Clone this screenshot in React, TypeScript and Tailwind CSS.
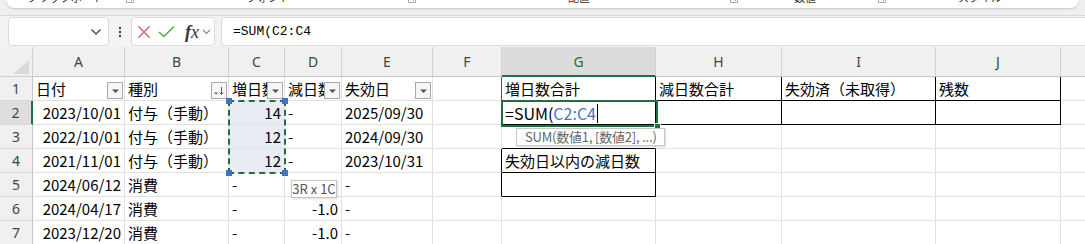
import React from "react";

const JP = '"Noto Sans CJK JP", "Noto Sans", sans-serif';
const UI = '"Noto Sans", "Noto Sans CJK JP", sans-serif';

const LETTERS = ["A", "B", "C", "D", "E", "F", "G", "H", "I", "J"];

type C = { t?: React.ReactNode; r?: boolean; f?: "d" | "s"; cls?: string };

const rows: C[][] = [
  [
    { t: "日付", f: "d" },
    { t: "種別", f: "s" },
    { t: "増日数", f: "d" },
    { t: "減日数", f: "d" },
    { t: "失効日", f: "d" },
    {},
    { t: "増日数合計", cls: "text-[13px]" },
    { t: "減日数合計", cls: "text-[13px]" },
    { t: "失効済（未取得）", cls: "text-[14px] text-[#555]" },
    { t: "残数", cls: "text-[14px] text-[#555]" },
  ],
  [
    { t: "2023/10/01", r: true },
    { t: "付与（手動）" },
    { t: "14", r: true },
    { t: "-" },
    { t: "2025/09/30" },
    {},
    {},
    {},
    {},
    {},
  ],
  [
    { t: "2022/10/01", r: true },
    { t: "付与（手動）" },
    { t: "12", r: true },
    { t: "-" },
    { t: "2024/09/30" },
    {},
    {},
    {},
    {},
    {},
  ],
  [
    { t: "2021/11/01", r: true },
    { t: "付与（手動）" },
    { t: "12", r: true },
    { t: "-" },
    { t: "2023/10/31" },
    {},
    { t: "失効日以内の減日数" },
    {},
    {},
    {},
  ],
  [
    { t: "2024/06/12", r: true },
    { t: "消費" },
    { t: "-" },
    { t: "" },
    { t: "-" },
    {},
    {},
    {},
    {},
    {},
  ],
  [
    { t: "2024/04/17", r: true },
    { t: "消費" },
    { t: "-" },
    { t: "-1.0", r: true },
    { t: "-" },
    {},
    {},
    {},
    {},
    {},
  ],
  [
    { t: "2023/12/20", r: true },
    { t: "消費" },
    { t: "-" },
    { t: "-1.0", r: true },
    { t: "-" },
    {},
    {},
    {},
    {},
    {},
  ],
];

const blackRight = new Set([
  "5,0", "5,1", "6,0", "7,0", "8,0", "9,0", "6,1", "7,1", "8,1", "9,1",
  "5,3", "5,4", "6,3", "6,4",
]);
const blackBottom = new Set([
  "6,0", "7,0", "8,0", "9,0", "6,1", "7,1", "8,1", "9,1", "6,2", "6,3", "6,4",
]);

function FilterBtn({ kind }: { kind: "d" | "s" }) {
  return (
    <div className="absolute right-[1px] bottom-[1px] w-[16px] h-[17px] border border-[#a9a9a9] bg-[#f6f6f6] flex items-center justify-center">
      {kind === "d" ? (
        <svg width="9" height="6" viewBox="0 0 9 6">
          <path d="M1 1.5h7L4.5 5z" fill="#555" />
        </svg>
      ) : (
        <svg width="12" height="10" viewBox="0 0 12 10">
          <path d="M1 6.5h4L3 8.5z" fill="#555" />
          <path d="M8.5 1v7.5M6.8 6.6l1.7 1.9 1.7-1.9" stroke="#555" strokeWidth="1" fill="none" />
        </svg>
      )}
    </div>
  );
}

function Cell({ c, col, row }: { c: C; col: number; row: number }) {
  const key = `${col},${row}`;
  const sel = col === 2 && row >= 1 && row <= 3;
  let rightCls = "border-r-[#e1e1e1]";
  if (blackRight.has(key)) rightCls = "border-r-black";
  if (key === "5,0") rightCls = "border-r-[#1e6e42]";
  const bottomCls = blackBottom.has(key) ? "border-b-black" : "border-b-[#e1e1e1]";
  const isG2 = key === "6,1";
  return (
    <div
      className={`relative border-r border-b ${rightCls} ${bottomCls} ${sel ? "bg-[#e8ecf5]" : "bg-white"} flex items-center overflow-hidden whitespace-nowrap ${
        c.r ? "justify-end pr-[3px]" : "justify-start pl-[3px]"
      } text-[15px] text-black pt-[1px] ${c.cls ?? ""}`}
      style={{ fontFamily: JP }}
    >
      {isG2 ? (
        <span className="text-[16px] flex items-center">
          <span>=SUM(</span>
          <span className="text-[#4a74c4]">C2:C4</span>
          <span className="inline-block w-[1px] h-[19px] bg-black ml-[1px]" />
        </span>
      ) : (
        c.t
      )}
      {c.f && <FilterBtn kind={c.f} />}
    </div>
  );
}

function Launcher() {
  return (
    <svg width="8" height="8" viewBox="0 0 8 8" className="-mt-[5px]">
      <path d="M0.5 0.5h7v7h-7z" stroke="#aaa" strokeWidth="1" fill="none" />
      <path d="M3 3l3 3" stroke="#aaa" strokeWidth="1" />
    </svg>
  );
}

export default function App() {
  const gridCols = "grid-cols-[33px_92px_104px_56px_57px_91px_69px_154px_126px_154px_125px_1fr]";
  return (
    <div className="w-[1085px] h-[244px] overflow-hidden bg-white" style={{ fontFamily: UI }}>
      {/* ribbon remnant */}
      <div className="h-[16px] bg-[#efefef] px-[7px] pb-[1px] border-b border-[#dadada]">
        <div className="h-[8px] bg-white rounded-b-[7px] shadow-[0_1px_2px_rgba(0,0,0,0.18)] overflow-hidden flex items-start text-[11px] text-[#333] leading-[12px]" style={{ fontFamily: JP }}>
          <span className="ml-[20px] -mt-[9px]">クリップボード</span>
          <span className="ml-[22px]"><Launcher /></span>
          <span className="ml-[112px] -mt-[9px]">フォント</span>
          <span className="ml-[118px]"><Launcher /></span>
          <span className="ml-[152px] -mt-[9px]">配置</span>
          <span className="ml-[140px]"><Launcher /></span>
          <span className="ml-[56px] -mt-[9px]">数値</span>
          <span className="ml-[62px]"><Launcher /></span>
          <span className="ml-[72px] -mt-[9px]">スタイル</span>
        </div>
      </div>
      {/* formula bar */}
      <div className="h-[31px] bg-[#f3f3f3] flex items-stretch pl-[8px] pt-[1px] pb-[1px]">
        <div className="w-[101px] bg-white border border-[#dcdcdc] rounded-[4px] flex items-center justify-end pr-[6px]">
          <svg width="12" height="8" viewBox="0 0 12 8">
            <path d="M1.5 1.5l4.5 4.5 4.5-4.5" stroke="#444" strokeWidth="1.3" fill="none" />
          </svg>
        </div>
        <div className="w-[22px] flex items-center justify-center">
          <svg width="4" height="12" viewBox="0 0 4 12">
            <circle cx="2" cy="2" r="1.2" fill="#444" />
            <circle cx="2" cy="6" r="1.2" fill="#444" />
            <circle cx="2" cy="10" r="1.2" fill="#444" />
          </svg>
        </div>
        <div className="w-[84px] bg-white border border-[#dcdcdc] rounded-[4px] flex items-center pl-[5px]">
          <svg width="14" height="14" viewBox="0 0 14 14">
            <path d="M1.5 1.5l11 11M12.5 1.5l-11 11" stroke="#e0585a" strokeWidth="1.4" fill="none" />
          </svg>
          <svg width="17" height="13" viewBox="0 0 17 13" className="ml-[7px]">
            <path d="M1 7l4.8 4.5L16 1.5" stroke="#4ea64f" strokeWidth="1.4" fill="none" />
          </svg>
          <span className="ml-[10px] text-[18px] italic text-[#333] leading-none" style={{ fontFamily: '"Liberation Serif", serif' }}>
            <span className="font-semibold">f</span>x
          </span>
          <svg width="9" height="6" viewBox="0 0 9 6" className="ml-[3px]">
            <path d="M1 1l3.5 3.5L8 1" stroke="#888" strokeWidth="1.1" fill="none" />
          </svg>
        </div>
        <div className="flex-1 ml-[6px] bg-white border border-r-0 border-[#dcdcdc] rounded-l-[4px] flex items-center pl-[11px] text-[13px] text-black" style={{ fontFamily: '"Liberation Mono", monospace' }}>
          =SUM(C2:C4
        </div>
      </div>
      {/* sheet */}
      <div className="relative">
        <div className={`grid ${gridCols} grid-rows-[30px_repeat(7,24px)]`}>
          <div className="relative bg-[#f0f0f0] border-r border-b border-[#d0d0d0]">
            <svg width="16" height="14" viewBox="0 0 16 14" className="absolute right-[3px] bottom-[2px]">
              <path d="M16 0v14H0z" fill="#dadada" />
            </svg>
          </div>
          {LETTERS.map((l) =>
            l === "G" ? (
              <div key={l} className="bg-[#dcdcdc] border-r border-[#d0d0d0] border-b-2 border-b-[#1e7145] flex items-center justify-center text-[14px] text-[#1e7145]">
                {l}
              </div>
            ) : (
              <div key={l} className="bg-[#f0f0f0] border-r border-b border-[#d0d0d0] border-b-[#c4c4c4] flex items-center justify-center text-[14px] text-[#444]">
                {l}
              </div>
            )
          )}
          <div className="bg-[#f0f0f0] border-b border-[#c4c4c4]" />
          {rows.map((r, ri) => (
            <React.Fragment key={ri}>
              <div
                className={`flex items-center justify-center text-[14px] text-[#444] border-b border-[#d8d8d8] ${
                  ri === 1 ? "bg-[#dedede] border-r-2 border-r-[#1e7145]" : "bg-[#f0f0f0] border-r border-r-[#c4c4c4]"
                }`}
              >
                {ri + 1}
              </div>
              {r.map((c, ci) => (
                <Cell key={ci} c={c} col={ci} row={ri} />
              ))}
              <div className="border-b border-[#e1e1e1]" />
            </React.Fragment>
          ))}
        </div>

        {/* C2:C4 copy marquee */}
        <div className="absolute left-[228px] top-[53px] w-[58px] h-[74px] border-2 border-dashed border-[#1e6e42] pointer-events-none" />
        <div className="absolute left-[226px] top-[51px] w-[6px] h-[6px] bg-[#3b74c9]" />
        <div className="absolute left-[282px] top-[51px] w-[6px] h-[6px] bg-[#3b74c9]" />
        <div className="absolute left-[226px] top-[123px] w-[6px] h-[6px] bg-[#3b74c9]" />
        <div className="absolute left-[282px] top-[123px] w-[6px] h-[6px] bg-[#3b74c9]" />

        {/* active cell G2 */}
        <div className="absolute left-[501px] top-[53px] w-[157px] h-[27px] border-2 border-[#1e6e42] pointer-events-none" />
        <div className="absolute left-[654px] top-[76px] w-[7px] h-[7px] bg-[#1e6e42] border border-white" />

        {/* tooltips */}
        <div className="absolute left-[516px] top-[81px] w-[149px] h-[18px] pl-[8px] bg-white border border-[#c6c6c6] shadow-[1px_1px_2px_rgba(0,0,0,0.15)] flex items-center text-[13px] text-[#666] whitespace-nowrap tracking-[-0.2px]" style={{ fontFamily: JP }}>
          SUM(数値1, [数値2], ...)
        </div>
        <div className="absolute left-[291px] top-[133px] w-[46px] h-[18px] bg-white border border-[#c6c6c6] shadow-[1px_1px_2px_rgba(0,0,0,0.15)] flex items-center justify-center text-[13px] text-[#555] whitespace-nowrap" style={{ fontFamily: JP }}>
          3R x 1C
        </div>
      </div>
    </div>
  );
}
